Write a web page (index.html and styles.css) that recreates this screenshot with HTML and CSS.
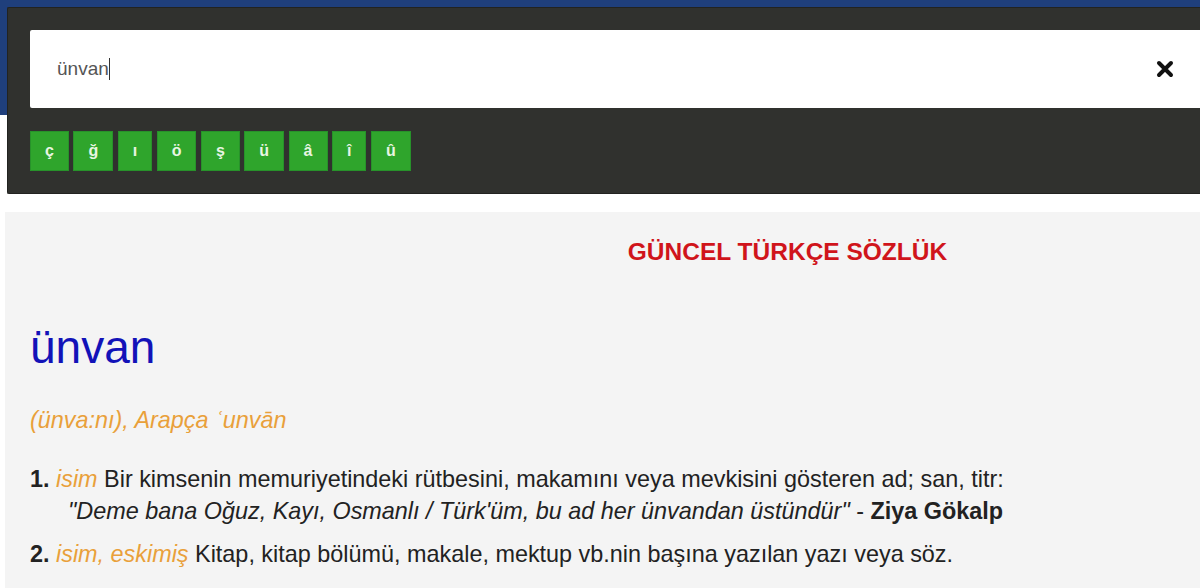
FILE: index.html
```html
<!DOCTYPE html>
<html lang="tr">

<head>
  <meta charset="UTF-8">
  <title>Güncel Türkçe Sözlük</title>
  <link rel="stylesheet" href="styles.css">
</head>

<body>

  <div class="top">
    <div class="search-panel">
      <div class="search-box">
        <span class="search-text">ünvan</span><span class="caret"></span>
        <span class="clear">
          <svg width="18" height="18" viewBox="0 0 18 18">
            <path d="M3 3 L15 15 M15 3 L3 15" stroke="#111" stroke-width="4" stroke-linecap="round" />
          </svg>
        </span>
      </div>
      <div class="letters">
        <button>ç</button>
        <button>ğ</button>
        <button>ı</button>
        <button>ö</button>
        <button>ş</button>
        <button>ü</button>
        <button>â</button>
        <button>î</button>
        <button>û</button>
      </div>
    </div>
  </div>

  <div class="result">
    <h2 class="dict-title">GÜNCEL TÜRKÇE SÖZLÜK</h2>
    <h1 class="word">ünvan</h1>
    <p class="origin">(ünva:nı), Arapça ʿunvān</p>

    <ol class="meanings">
      <li>
        <b>1.</b> <i class="tag">isim</i> Bir kimsenin memuriyetindeki rütbesini, makamını veya mevkisini gösteren ad; san, titr:
        <div class="example"><i>"Deme bana Oğuz, Kayı, Osmanlı / Türk'üm, bu ad her ünvandan üstündür"</i> - <b>Ziya Gökalp</b></div>
      </li>
      <li>
        <b>2.</b> <i class="tag">isim, eskimiş</i> Kitap, kitap bölümü, makale, mektup vb.nin başına yazılan yazı veya söz.
      </li>
    </ol>
  </div>

</body>

</html>
```

FILE: styles.css
```css
body {
  margin: 0;
  height: 100vh;
  display: flex;
  flex-direction: column;
  font-family: 'Liberation Sans', Arial, sans-serif;
  background-color: #fff;
  color: #222;
  overflow: hidden;
}

.top {
  padding: 7px 0 0 7px;
  background: linear-gradient(#1f3f7c 115px, #fff 115px);
}

.search-panel {
  background-color: #30312e;
  border: 1px solid #222320;
  border-right: none;
  border-radius: 2px 0 0 2px;
  padding: 22px 0 22px 22px;
}

.search-box {
  display: flex;
  align-items: center;
  height: 78px;
  background: #fff;
  border-radius: 2px 0 0 2px;
  padding: 0 26px 0 27px;
}

.search-text {
  font-size: 19px;
  color: #555;
}

.caret {
  width: 1px;
  height: 22px;
  background: #333;
}

.clear {
  margin-left: auto;
  display: flex;
}

.letters {
  display: flex;
  gap: 4.5px;
  margin-top: 23px;
}

.letters button {
  height: 40px;
  padding: 0 14px;
  background-color: #2fa52c;
  border: 1px solid #27922a;
  color: #e8f5e2;
  font-family: 'Liberation Sans', Arial, sans-serif;
  font-size: 16px;
  font-weight: bold;
}

.result {
  flex: 1;
  margin: 18px 0 0 5px;
  background-color: #f4f4f4;
  padding: 25px 0 0 25px;
}

.dict-title {
  margin: 0 0 0 345px;
  text-align: center;
  font-size: 24.5px;
  line-height: 30px;
  color: #d0141b;
}

.word {
  margin: 52px 0 0;
  font-size: 46px;
  font-weight: normal;
  line-height: 56px;
  color: #1212b8;
}

.origin {
  margin: 32px 0 0;
  font-size: 23.4px;
  font-style: italic;
  color: #e9a03a;
}

.meanings {
  list-style: none;
  margin: 30px 0 0;
  padding: 0;
  font-size: 23.4px;
  line-height: 30px;
}

.meanings li {
  margin-bottom: 13px;
}

.tag {
  color: #e9a03a;
}

.example {
  padding: 2px 0 0 38px;
}
```
